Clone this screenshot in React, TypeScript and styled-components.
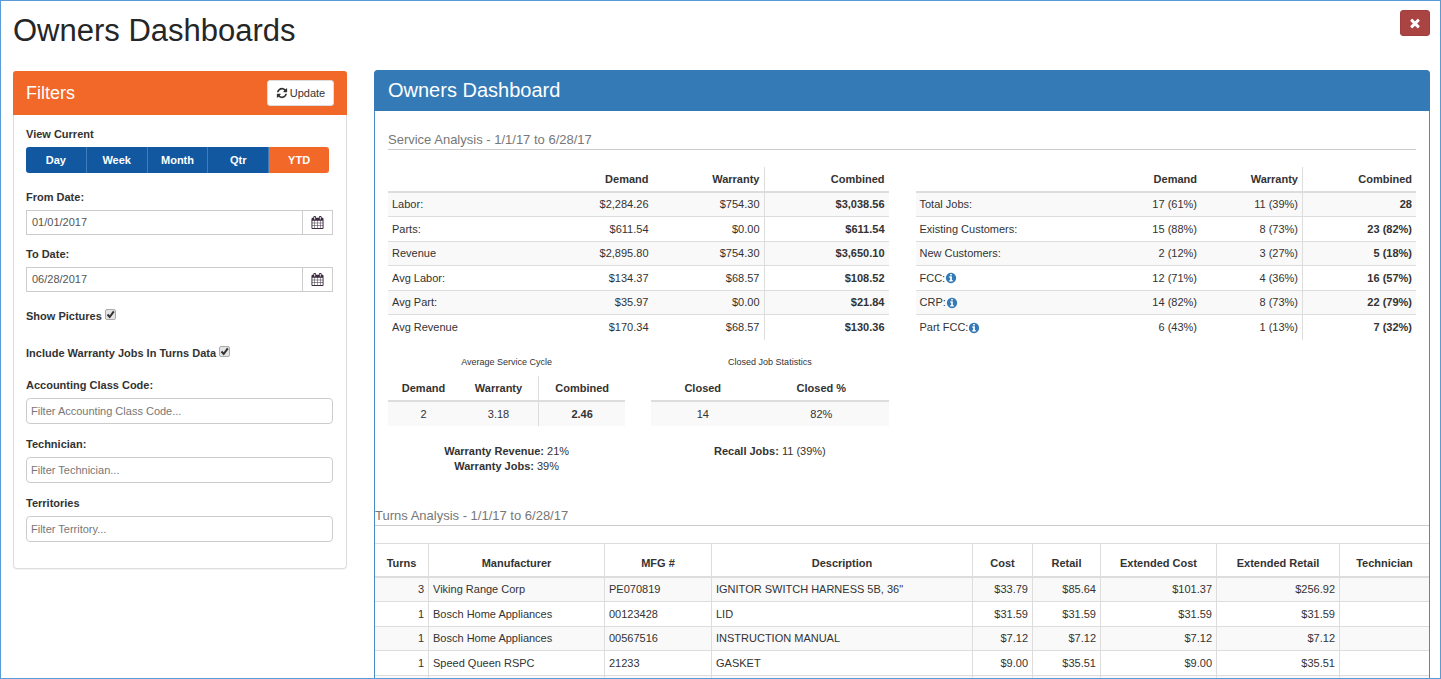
import React from 'react';
import styled, { createGlobalStyle, css } from 'styled-components';

const GlobalStyle = createGlobalStyle`
  *, *::before, *::after { box-sizing: border-box; }
  body {
    margin: 0;
    background: #fff;
    color: #333;
    font: 11px/15px "Liberation Sans", Arial, sans-serif;
  }
  h1, h2, h3, p { margin: 0; font-weight: 400; }
  button, input { font: inherit; color: inherit; }
`;

/* ---------- icons ---------- */

const ICONS = {
  refresh:
    'M1639 1056q0 5-1 7-64 268-268 434.5t-478 166.5q-146 0-282.5-55t-243.5-157l-129 129q-19 19-45 19t-45-19-19-45v-448q0-26 19-45t45-19h448q26 0 45 19t19 45-19 45l-137 137q71 66 161 102t187 36q134 0 250-65t186-179q11-17 53-117 8-23 30-23h192q13 0 22.5 9.5t9.5 22.5zm25-800v448q0 26-19 45t-45 19h-448q-26 0-45-19t-19-45 19-45l138-138q-148-137-349-137-134 0-250 65t-186 179q-11 17-53 117-8 23-30 23h-199q-13 0-22.5-9.5t-9.5-22.5v-7q65-268 270-434.5t480-166.5q146 0 284 55.5t245 156.5l130-129q19-19 45-19t45 19 19 45z',
  calendar:
    'M192 1664h288v-288h-288v288zm352 0h320v-288h-320v288zm-352-352h288v-320h-288v320zm352 0h320v-320h-320v320zm-352-384h288v-288h-288v288zm736 736h320v-288h-320v288zm-384-736h320v-288h-320v288zm768 736h288v-288h-288v288zm-384-352h320v-320h-320v320zm-352-864v-288q0-13-9.5-22.5t-22.5-9.5h-64q-13 0-22.5 9.5t-9.5 22.5v288q0 13 9.5 22.5t22.5 9.5h64q13 0 22.5-9.5t9.5-22.5zm736 864h288v-320h-288v320zm-384-384h320v-288h-320v288zm384 0h288v-288h-288v288zm32-480v-288q0-13-9.5-22.5t-22.5-9.5h-64q-13 0-22.5 9.5t-9.5 22.5v288q0 13 9.5 22.5t22.5 9.5h64q13 0 22.5-9.5t9.5-22.5zm384-64v1280q0 52-38 90t-90 38h-1408q-52 0-90-38t-38-90v-1280q0-52 38-90t90-38h128v-96q0-66 47-113t113-47h64q66 0 113 47t47 113v96h384v-96q0-66 47-113t113-47h64q66 0 113 47t47 113v96h128q52 0 90 38t38 90z',
  info:
    'M1152 1376v-160q0-14-9-23t-23-9h-96v-512q0-14-9-23t-23-9h-320q-14 0-23 9t-9 23v160q0 14 9 23t23 9h96v320h-96q-14 0-23 9t-9 23v160q0 14 9 23t23 9h448q14 0 23-9t9-23zm-128-896v-160q0-14-9-23t-23-9h-192q-14 0-23 9t-9 23v160q0 14 9 23t23 9h192q14 0 23-9t9-23zm640 416q0 209-103 385.5t-279.5 279.5-385.5 103-385.5-103-279.5-279.5-103-385.5 103-385.5 279.5-279.5 385.5-103 385.5 103 279.5 279.5 103 385.5z',
  times:
    'M1490 1322q0 40-28 68l-136 136q-28 28-68 28t-68-28l-294-294-294 294q-28 28-68 28t-68-28l-136-136q-28-28-28-68t28-68l294-294-294-294q-28-28-28-68t28-68l136-136q28-28 68-28t68 28l294 294 294-294q28-28 68-28t68 28l136 136q28 28 28 68t-28 68l-294 294 294 294q28 28 28 68z',
};

const Svg = styled.svg<{ $size: number }>`
  width: ${(p) => p.$size}px;
  height: ${(p) => p.$size}px;
  fill: currentColor;
  flex: none;
`;

function Icon({ name, size = 12 }: { name: keyof typeof ICONS; size?: number }) {
  return (
    <Svg $size={size} viewBox="0 0 1792 1792" aria-hidden="true">
      <path d={ICONS[name]} />
    </Svg>
  );
}

/* ---------- page ---------- */

const Page = styled.div`
  height: 100vh;
  overflow: hidden;
  border: 1px solid #5b9bd5;
  padding: 9px 10px 0 12px;
`;

const PageHeader = styled.header`
  display: flex;
  justify-content: space-between;
  align-items: flex-start;
  height: 60px;
`;

const PageTitle = styled.h1`
  font-size: 31px;
  line-height: 42px;
  color: #262626;
`;

const CloseButton = styled.button`
  display: grid;
  place-items: center;
  width: 30px;
  height: 26px;
  padding: 0;
  border: 1px solid #a23f3d;
  border-radius: 3px;
  background: #a94442;
  color: #fff;
`;

const Columns = styled.div`
  display: grid;
  grid-template-columns: 334px minmax(0, 1fr);
  gap: 27px;
  align-items: start;
`;

/* ---------- filters ---------- */

const FilterPanel = styled.aside`
  margin-top: 1px;
  border: 1px solid #ddd;
  border-top: 0;
  border-radius: 4px;
  box-shadow: 0 1px 1px rgba(0, 0, 0, 0.05);
`;

const FilterHeader = styled.div`
  display: flex;
  justify-content: space-between;
  align-items: center;
  height: 44px;
  margin: 0 -1px;
  padding: 0 13px;
  border-radius: 3px 3px 0 0;
  background: #f26829;
`;

const FilterTitle = styled.h2`
  font-size: 18px;
  line-height: 20px;
  color: #fff;
`;

const UpdateButton = styled.button`
  display: flex;
  align-items: center;
  justify-content: center;
  gap: 2px;
  width: 67px;
  height: 26px;
  padding: 0;
  border: 1px solid #ddd;
  border-radius: 3px;
  background: #fff;
`;

const FilterForm = styled.form`
  padding: 12px 13px 13px 12px;
`;

const Field = styled.div<{ $gap: number }>`
  display: flex;
  flex-direction: column;
  gap: 5px;
  margin-bottom: ${(p) => p.$gap}px;
`;

const Label = styled.label`
  font-weight: 700;
`;

const GroupLabel = styled.span`
  font-weight: 700;
`;

const PeriodGroup = styled.div`
  display: flex;
  width: 303px;
  border-radius: 3px;
  overflow: hidden;
`;

const PeriodButton = styled.button<{ $active?: boolean }>`
  flex: 1;
  height: 26px;
  padding: 0;
  border: 0;
  border-right: 1px solid #3f7cba;
  background: #1158a1;
  color: #fff;
  font-weight: 700;
  &:last-child { border-right: 0; }
  ${(p) => p.$active && css`background: #f26829;`}
`;

const DateGroup = styled.div`
  display: flex;
  height: 25px;
  border: 1px solid #ccc;
`;

const DateInput = styled.input`
  flex: 1;
  min-width: 0;
  padding: 0 5px;
  border: 0;
  outline: 0;
  color: #555;
`;

const CalendarButton = styled.button`
  display: grid;
  place-items: center;
  width: 30px;
  padding: 0;
  border: 0;
  border-left: 1px solid #ccc;
  background: #fff;
  color: #3a2a40;
`;

const Checks = styled.div`
  display: flex;
  flex-direction: column;
  align-items: flex-start;
  gap: 22px;
  margin-bottom: 17px;
`;

const CheckRow = styled.label`
  display: flex;
  align-items: center;
  gap: 3px;
  height: 15px;
  font-weight: 700;
`;

const CheckWrap = styled.span`
  position: relative;
  width: 11px;
  height: 11px;
  margin-bottom: 4px;
`;

const CheckInput = styled.input`
  appearance: none;
  display: block;
  width: 11px;
  height: 11px;
  margin: 0;
  border: 1px solid #aaa;
  border-radius: 2px;
  background: #e4e4e4;
  &:not(:checked) + svg { display: none; }
`;

const CheckMark = styled.svg`
  position: absolute;
  inset: 0;
  width: 11px;
  height: 11px;
  fill: none;
  stroke: #333;
  stroke-width: 2;
  pointer-events: none;
`;

const TextInput = styled.input`
  height: 26px;
  padding: 0 4px;
  border: 1px solid #ccc;
  border-radius: 4px;
  outline: 0;
  &::placeholder { color: #777; opacity: 1; }
`;

/* ---------- dashboard ---------- */

const DashPanel = styled.main`
  border: 1px solid #4a8bc6;
  border-radius: 4px 4px 0 0;
`;

const DashTitle = styled.h2`
  height: 41px;
  margin: -1px -1px 0;
  padding: 0 14px;
  border-radius: 4px 4px 0 0;
  background: #337ab7;
  color: #fff;
  font-size: 20px;
  line-height: 41px;
`;

const ServiceSection = styled.section`
  padding: 21px 13px 0;
`;

const SectionTitle = styled.h3`
  padding-bottom: 1px;
  border-bottom: 1px solid #ccc;
  color: #777;
  font-size: 13px;
  line-height: 16px;
  margin-bottom: 17px;
`;

const TwoUp = styled.div`
  display: grid;
  grid-template-columns: 1fr 1fr;
  column-gap: 27px;
`;

const Table = styled.table`
  width: 100%;
  table-layout: fixed;
  border-collapse: separate;
  border-spacing: 0;
`;

const HeadCell = styled.th<{ $align?: string; $rule?: boolean }>`
  height: 26px;
  padding: 0 4px;
  border-bottom: 2px solid #ddd;
  text-align: ${(p) => p.$align ?? 'right'};
  vertical-align: middle;
  ${(p) => p.$rule && css`border-right: 1px solid #ddd;`}
`;

const Row = styled.tr`
  height: 24px;
  &:nth-child(odd) { background: #f9f9f9; }
  &:nth-child(even) { height: 25px; }
  &:not(:last-child) > td { border-bottom: 1px solid #ddd; }
`;

const Cell = styled.td<{ $align?: string; $rule?: boolean; $bold?: boolean }>`
  padding: 0 4px;
  text-align: ${(p) => p.$align ?? 'right'};
  vertical-align: middle;
  white-space: nowrap;
  ${(p) => p.$rule && css`border-right: 1px solid #ddd;`}
  ${(p) => p.$bold && css`font-weight: 700;`}
`;

const WithInfo = styled.span`
  display: flex;
  align-items: center;
  svg { color: #337ab7; }
`;

const StatCards = styled.div`
  display: grid;
  grid-template-columns: 1fr 1fr;
  gap: 26px;
  padding-top: 16px;
`;

const StatCard = styled.div`
  text-align: center;
`;

const StatCaption = styled.p`
  font-size: 9px;
  line-height: 12px;
  margin-bottom: 8px;
`;

const StatNotes = styled.div`
  padding-top: 18px;
`;

const TurnsSection = styled.section`
  padding-top: 34px;
`;

const TurnsHead = styled(HeadCell)`
  height: 35px;
  padding-top: 6px;
  border-top: 1px solid #ddd;
`;

/* ---------- data ---------- */

type Summary = { label: string; info?: boolean; values: [string, string, string] };

const money: Summary[] = [
  { label: 'Labor:', values: ['$2,284.26', '$754.30', '$3,038.56'] },
  { label: 'Parts:', values: ['$611.54', '$0.00', '$611.54'] },
  { label: 'Revenue', values: ['$2,895.80', '$754.30', '$3,650.10'] },
  { label: 'Avg Labor:', values: ['$134.37', '$68.57', '$108.52'] },
  { label: 'Avg Part:', values: ['$35.97', '$0.00', '$21.84'] },
  { label: 'Avg Revenue', values: ['$170.34', '$68.57', '$130.36'] },
];

const jobs: Summary[] = [
  { label: 'Total Jobs:', values: ['17 (61%)', '11 (39%)', '28'] },
  { label: 'Existing Customers:', values: ['15 (88%)', '8 (73%)', '23 (82%)'] },
  { label: 'New Customers:', values: ['2 (12%)', '3 (27%)', '5 (18%)'] },
  { label: 'FCC:', info: true, values: ['12 (71%)', '4 (36%)', '16 (57%)'] },
  { label: 'CRP:', info: true, values: ['14 (82%)', '8 (73%)', '22 (79%)'] },
  { label: 'Part FCC:', info: true, values: ['6 (43%)', '1 (13%)', '7 (32%)'] },
];

const turnsColumns: { title: string; width?: number; align: string }[] = [
  { title: 'Turns', width: 54, align: 'right' },
  { title: 'Manufacturer', width: 176, align: 'left' },
  { title: 'MFG #', width: 107, align: 'left' },
  { title: 'Description', align: 'left' },
  { title: 'Cost', width: 60, align: 'right' },
  { title: 'Retail', width: 68, align: 'right' },
  { title: 'Extended Cost', width: 116, align: 'right' },
  { title: 'Extended Retail', width: 123, align: 'right' },
  { title: 'Technician', width: 89, align: 'left' },
];

const turns = [
  ['3', 'Viking Range Corp', 'PE070819', 'IGNITOR SWITCH HARNESS 5B, 36"', '$33.79', '$85.64', '$101.37', '$256.92', ''],
  ['1', 'Bosch Home Appliances', '00123428', 'LID', '$31.59', '$31.59', '$31.59', '$31.59', ''],
  ['1', 'Bosch Home Appliances', '00567516', 'INSTRUCTION MANUAL', '$7.12', '$7.12', '$7.12', '$7.12', ''],
  ['1', 'Speed Queen RSPC', '21233', 'GASKET', '$9.00', '$35.51', '$9.00', '$35.51', ''],
  ['', '', '', '', '', '', '', '', ''],
];

function SummaryTable({ rows, widths }: { rows: Summary[]; widths: number[] }) {
  return (
    <Table>
      <colgroup>
        <col />
        {widths.map((w, i) => <col key={i} width={w} />)}
      </colgroup>
      <thead>
        <tr>
          <HeadCell as="td" />
          <HeadCell>Demand</HeadCell>
          <HeadCell $rule>Warranty</HeadCell>
          <HeadCell>Combined</HeadCell>
        </tr>
      </thead>
      <tbody>
        {rows.map((r) => (
          <Row key={r.label}>
            <Cell $align="left">
              {r.info ? <WithInfo>{r.label}<Icon name="info" /></WithInfo> : r.label}
            </Cell>
            <Cell>{r.values[0]}</Cell>
            <Cell $rule>{r.values[1]}</Cell>
            <Cell $bold>{r.values[2]}</Cell>
          </Row>
        ))}
      </tbody>
    </Table>
  );
}

function Check({ label }: { label: string }) {
  return (
    <CheckRow>
      {label}
      <CheckWrap>
        <CheckInput type="checkbox" defaultChecked />
        <CheckMark viewBox="0 0 11 11" aria-hidden="true"><path d="M2.5 5.5 4.7 8 8.8 2.4" /></CheckMark>
      </CheckWrap>
    </CheckRow>
  );
}

function DateField({ id, label, value, gap }: { id: string; label: string; value: string; gap: number }) {
  return (
    <Field $gap={gap}>
      <Label htmlFor={id}>{label}</Label>
      <DateGroup>
        <DateInput id={id} type="text" defaultValue={value} />
        <CalendarButton type="button" aria-label={`Pick ${label}`}><Icon name="calendar" size={13} /></CalendarButton>
      </DateGroup>
    </Field>
  );
}

function TextField({ id, label, placeholder }: { id: string; label: string; placeholder: string }) {
  return (
    <Field $gap={13}>
      <Label htmlFor={id}>{label}</Label>
      <TextInput id={id} type="text" placeholder={placeholder} />
    </Field>
  );
}

export default function App() {
  const [period, setPeriod] = React.useState('YTD');
  return (
    <>
      <GlobalStyle />
      <Page>
        <PageHeader>
          <PageTitle>Owners Dashboards</PageTitle>
          <CloseButton type="button" aria-label="Close"><Icon name="times" size={14} /></CloseButton>
        </PageHeader>
        <Columns>
          <FilterPanel>
            <FilterHeader>
              <FilterTitle>Filters</FilterTitle>
              <UpdateButton type="submit" form="filters"><Icon name="refresh" />Update</UpdateButton>
            </FilterHeader>
            <FilterForm id="filters" onSubmit={(e) => e.preventDefault()}>
              <Field $gap={17}>
                <GroupLabel id="period">View Current</GroupLabel>
                <PeriodGroup role="group" aria-labelledby="period">
                  {['Day', 'Week', 'Month', 'Qtr', 'YTD'].map((p) => (
                    <PeriodButton key={p} type="button" $active={p === period} onClick={() => setPeriod(p)}>{p}</PeriodButton>
                  ))}
                </PeriodGroup>
              </Field>
              <DateField id="from" label="From Date:" value="01/01/2017" gap={12} />
              <DateField id="to" label="To Date:" value="06/28/2017" gap={17} />
              <Checks>
                <Check label="Show Pictures" />
                <Check label="Include Warranty Jobs In Turns Data" />
              </Checks>
              <TextField id="class-code" label="Accounting Class Code:" placeholder="Filter Accounting Class Code..." />
              <TextField id="technician" label="Technician:" placeholder="Filter Technician..." />
              <TextField id="territories" label="Territories" placeholder="Filter Territory..." />
            </FilterForm>
          </FilterPanel>

          <DashPanel>
            <DashTitle>Owners Dashboard</DashTitle>
            <ServiceSection>
              <SectionTitle>Service Analysis - 1/1/17 to 6/28/17</SectionTitle>
              <TwoUp>
                <SummaryTable rows={money} widths={[120, 112, 124]} />
                <SummaryTable rows={jobs} widths={[120, 102, 113]} />
                <StatCards>
                  <StatCard>
                    <StatCaption>Average Service Cycle</StatCaption>
                    <Table>
                      <colgroup><col width={71} /><col width={80} /><col /></colgroup>
                      <thead>
                        <tr>
                          <HeadCell $align="center">Demand</HeadCell>
                          <HeadCell $align="center" $rule>Warranty</HeadCell>
                          <HeadCell $align="center">Combined</HeadCell>
                        </tr>
                      </thead>
                      <tbody>
                        <Row>
                          <Cell $align="center">2</Cell>
                          <Cell $align="center" $rule>3.18</Cell>
                          <Cell $align="center" $bold>2.46</Cell>
                        </Row>
                      </tbody>
                    </Table>
                    <StatNotes>
                      <p><b>Warranty Revenue:</b> 21%</p>
                      <p><b>Warranty Jobs:</b> 39%</p>
                    </StatNotes>
                  </StatCard>
                  <StatCard>
                    <StatCaption>Closed Job Statistics</StatCaption>
                    <Table>
                      <colgroup><col width={103} /><col /></colgroup>
                      <thead>
                        <tr>
                          <HeadCell $align="center">Closed</HeadCell>
                          <HeadCell $align="center">Closed %</HeadCell>
                        </tr>
                      </thead>
                      <tbody>
                        <Row>
                          <Cell $align="center">14</Cell>
                          <Cell $align="center">82%</Cell>
                        </Row>
                      </tbody>
                    </Table>
                    <StatNotes>
                      <p><b>Recall Jobs:</b> 11 (39%)</p>
                    </StatNotes>
                  </StatCard>
                </StatCards>
              </TwoUp>
            </ServiceSection>
            <TurnsSection>
              <SectionTitle>Turns Analysis - 1/1/17 to 6/28/17</SectionTitle>
              <Table>
                <colgroup>
                  {turnsColumns.map((c) => <col key={c.title} width={c.width} />)}
                </colgroup>
                <thead>
                  <tr>
                    {turnsColumns.map((c, i) => (
                      <TurnsHead key={c.title} $align="center" $rule={i < turnsColumns.length - 1}>{c.title}</TurnsHead>
                    ))}
                  </tr>
                </thead>
                <tbody>
                  {turns.map((row, r) => (
                    <Row key={r}>
                      {row.map((v, i) => (
                        <Cell key={i} $align={turnsColumns[i].align} $rule={i < turnsColumns.length - 1}>{v}</Cell>
                      ))}
                    </Row>
                  ))}
                </tbody>
              </Table>
            </TurnsSection>
          </DashPanel>
        </Columns>
      </Page>
    </>
  );
}
